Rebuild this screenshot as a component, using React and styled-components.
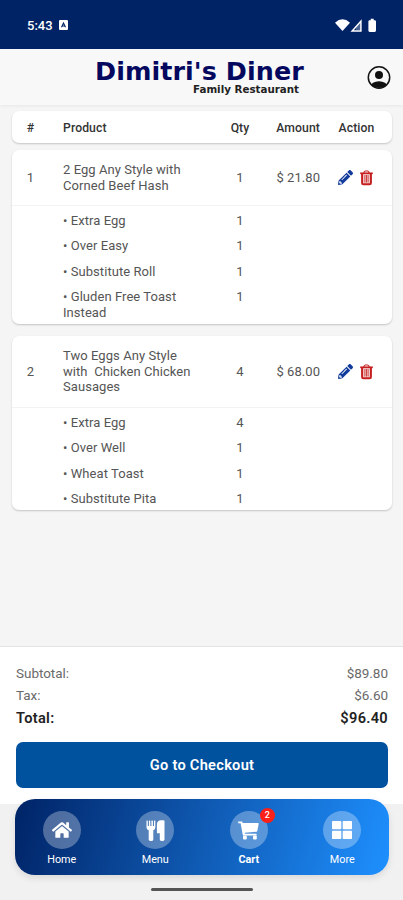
import React from "react";
import styled, { createGlobalStyle } from "styled-components";
import { FaPencilAlt, FaHome } from "react-icons/fa";

const GlobalStyle = createGlobalStyle`
  * { box-sizing: border-box; }
  body { margin: 0; background: #f5f5f5; font-family: Roboto, "Liberation Sans", sans-serif; }
`;

const Screen = styled.div`
  width: 403px;
  height: 900px;
  display: flex;
  flex-direction: column;
  background: #f5f5f5;
  overflow: hidden;
`;

const StatusBar = styled.div`
  height: 49px;
  flex: none;
  display: flex;
  align-items: center;
  justify-content: space-between;
  padding: 1px 26px 0 27px;
  background: #002366;
  color: #fff;
`;

const StatusGroup = styled.div`
  display: flex;
  align-items: center;
  gap: ${(p) => p.$gap}px;
`;

const Clock = styled.span`
  font-size: 13px;
  font-weight: 500;
`;

const Header = styled.header`
  height: 56px;
  flex: none;
  display: grid;
  grid-template-columns: 1fr 24px;
  align-items: center;
  padding: 0 12px 0 95px;
  background: #f8f8f8;
  box-shadow: 0 1px 3px rgba(0, 0, 0, 0.06);
`;

const Logo = styled.div`
  width: 212px;
  font-family: "DejaVu Sans", sans-serif;
  font-weight: 700;
  white-space: nowrap;
`;

const LogoName = styled.div`
  font-size: 25.4px;
  letter-spacing: 0.08px;
  line-height: 26px;
  color: #05085f;
`;

const LogoTag = styled.div`
  height: 12px;
  font-size: 10.3px;
  line-height: 11px;
  color: #222;
  padding-left: 98px;
`;

const Main = styled.main`
  flex: 1;
  min-height: 0;
  padding: 6px 11px 0 12px;
`;

const Card = styled.section`
  height: ${(p) => p.$height}px;
  margin-bottom: ${(p) => p.$gap}px;
  background: #fff;
  border-radius: 7px;
  box-shadow: 0 1px 2px rgba(0, 0, 0, 0.2);
`;

const Row = styled.div`
  display: grid;
  grid-template-columns: 37px 158px 66px 1fr 71px;
  align-items: ${(p) => (p.$top ? "start" : "center")};
  height: ${(p) => (p.$height ? `${p.$height}px` : "auto")};
  font-size: 13px;
  line-height: 15.5px;
  letter-spacing: 0.06px;
  color: #555;
`;

const HeadRow = styled(Row)`
  height: 35px;
  font-size: 12.2px;
  font-weight: 500;
  letter-spacing: 0.1px;
  color: #333;
`;

const ItemRow = styled(Row)`
  border-bottom: 1px solid #f3f3f3;
`;

const Options = styled.div`
  display: grid;
  row-gap: 10px;
  padding-top: 6.5px;
`;

const Center = styled.span`
  text-align: center;
`;

const Product = styled.span`
  padding-left: 14px;
  white-space: pre;
`;

const Qty = styled.span`
  text-align: center;
`;

const Amount = styled.span`
  text-align: right;
  white-space: nowrap;
  padding-right: 1px;
`;

const Actions = styled.span`
  display: flex;
  align-items: center;
  gap: 7px;
  padding-left: 17px;
`;

const Summary = styled.section`
  height: 158px;
  flex: none;
  padding: 16px 15px 0 16px;
  background: #fff;
  border-top: 1px solid #e3e3e3;
`;

const SumLine = styled.div`
  display: flex;
  justify-content: space-between;
  font-size: 13.5px;
  line-height: 21.5px;
  letter-spacing: -0.03px;
  color: #6a6a6a;
`;

const TotalLine = styled(SumLine)`
  font-size: 14.6px;
  line-height: 25px;
  font-weight: 600;
  letter-spacing: 0.3px;
  color: #222;
`;

const Checkout = styled.button`
  display: block;
  width: 372px;
  height: 46px;
  margin-top: 11px;
  padding: 0;
  border: 0;
  border-radius: 7px;
  background: #00529f;
  color: #fff;
  font: 600 14.6px Roboto, sans-serif;
  letter-spacing: 0.28px;
`;

const Bottom = styled.div`
  height: 96px;
  flex: none;
  padding: 0 14px 0 15px;
  background: #f1f1f1;
`;

const NavBar = styled.nav`
  height: 76px;
  margin-top: -5px;
  display: grid;
  grid-template-columns: repeat(4, 1fr);
  border-radius: 20px;
  background: linear-gradient(105deg, #002366 0%, #1e90ff 100%);
  box-shadow: 0 3px 7px rgba(0, 0, 0, 0.1);
  position: relative;
`;

const NavItem = styled.div`
  display: flex;
  flex-direction: column;
  align-items: center;
  padding-top: 12px;
  color: #fff;
`;

const Disc = styled.div`
  position: relative;
  display: grid;
  place-items: center;
  width: 38px;
  height: 38px;
  border-radius: 50%;
  background: rgba(255, 255, 255, 0.3);
`;

const NavLabel = styled.span`
  margin-top: 4px;
  font-size: 10.8px;
  line-height: 13px;
  font-weight: ${(p) => (p.$active ? 700 : 400)};
`;

const Badge = styled.span`
  position: absolute;
  top: -3px;
  right: -7px;
  width: 15px;
  height: 15px;
  border-radius: 50%;
  background: #fb2018;
  font-size: 9px;
  font-weight: 500;
  line-height: 15px;
  text-align: center;
`;

const HomeBar = styled.div`
  width: 102px;
  height: 3px;
  margin: 13px auto 0;
  border-radius: 2px;
  background: #555;
`;

const AppBadgeIcon = () => (
  <svg width="9" height="10" viewBox="0 0 9 10">
    <rect width="9" height="10" rx="1" fill="#fff" />
    <path d="M2.5 7.300 4.500 3l2 4.300M3.300 6h2.400" fill="none" stroke="#002366" strokeWidth="1.1" />
  </svg>
);

const SignalIcons = () => (
  <svg width="42" height="15" viewBox="0 0 42 15">
    <path d="M0 4.700Q7.500-2.200 15 4.700L7.500 13Z" fill="#fff" />
    <path d="M17.200 12.900h8.700V3.300Z" fill="none" stroke="#fff" strokeWidth="1.5" />
    <path d="M21 12V9.500l4-4V12Z" fill="#fff" opacity=".3" />
    <path d="M35.700.8h3v1.500h1q1.300 0 1.300 1.300v9q0 1.400-1.300 1.400h-5q-1.300 0-1.300-1.400v-9q0-1.300 1.300-1.300h1Z" fill="#fff" />
  </svg>
);

const UserIcon = () => (
  <svg width="24" height="24" viewBox="0 0 24 24">
    <clipPath id="user-ring"><circle cx="12" cy="12.5" r="10.5" /></clipPath>
    <circle cx="12" cy="12.5" r="10.7" fill="none" stroke="#111" strokeWidth="1.5" />
    <circle cx="12" cy="10" r="4" fill="#111" />
    <ellipse cx="12" cy="21.5" rx="8.5" ry="5.2" fill="#111" clipPath="url(#user-ring)" />
  </svg>
);

const TrashIcon = () => (
  <svg width="13" height="16" viewBox="0 0 13 16" fill="none" stroke="#c51f20">
    <path d="M2 3.5h9v9.600q0 1.400-1.400 1.400H3.400Q2 14.500 2 13.100Z" fill="#f6d5d5" stroke="none" />
    <path d="M.2 3.300h12.600" strokeWidth="1.7" />
    <path d="M3.800 3Q4.100 1 5.300 1h2.400Q8.900 1 9.200 3" strokeWidth="1.2" />
    <path d="M2.100 3.500v9.500q0 1.300 1.300 1.300h6.200q1.300 0 1.300-1.300V3.500" strokeWidth="2" />
    <path d="M4.900 5v7.500M6.500 5v7.500M8.100 5v7.500" strokeWidth=".8" />
  </svg>
);

const CutleryIcon = () => (
  <svg width="19" height="21" viewBox="0 0 19 21" fill="#fff">
    <path d="M.5.8Q1 0 1.800.8V6h1.100V.8q.7-.8 1.400 0V6h1.100V.8q.8-.8 1.500 0V6H8V.8q.7-.8 1.300 0v6.700q0 2-2 2.800v9.100q0 1.500-2.300 1.500t-2.300-1.500v-9.100Q.5 9.500.5 7.500Z" />
    <path d="M18.500 1v18.400q0 1.500-2.400 1.500-2.300 0-2.300-1.500v-6.100h-2.900V4.700Q10.900.2 15.200.2h2.200q1.100 0 1.100.8Z" />
  </svg>
);

const CartIcon = () => (
  <svg width="21" height="19" viewBox="0 0 21 19" fill="#fff">
    <path d="M.2.5h3.500q.8 0 1 .8L4.300 2H20q.8 0 .7.800l-1.400 7.100q-.1.700-.8.800L6.700 11.800l.3 1h11q.7 0 .7.900t-.7.900H5.600q-.7 0-.8-.7L2.600 2.300H.2Z" />
    <rect x="5" y="14.500" width="3.800" height="4" rx="1" />
    <rect x="15" y="14.500" width="3.800" height="4" rx="1" />
  </svg>
);

const GridIcon = () => (
  <svg width="20" height="18" viewBox="0 0 20 18" fill="#fff">
    <rect width="9.300" height="8.300" rx=".8" />
    <rect x="10.700" width="9.300" height="8.300" rx=".8" />
    <rect y="9.700" width="9.300" height="8.300" rx=".8" />
    <rect x="10.700" y="9.700" width="9.300" height="8.300" rx=".8" />
  </svg>
);

const orders = [
  {
    name: "2 Egg Any Style with\nCorned Beef Hash",
    qty: 1,
    amount: "$ 21.80",
    rowHeight: 56,
    options: [["Extra Egg", 1], ["Over Easy", 1], ["Substitute Roll", 1], ["Gluden Free Toast\nInstead", 1]],
  },
  {
    name: "Two Eggs Any Style\nwith  Chicken Chicken\nSausages",
    qty: 4,
    amount: "$ 68.00",
    rowHeight: 72,
    options: [["Extra Egg", 4], ["Over Well", 1], ["Wheat Toast", 1], ["Substitute Pita", 1]],
  },
];

const OrderCard = ({ order, index }) => (
  <Card $height={174} $gap={12}>
    <ItemRow $height={order.rowHeight}>
      <Center>{index}</Center>
      <Product>{order.name}</Product>
      <Qty>{order.qty}</Qty>
      <Amount>{order.amount}</Amount>
      <Actions>
        <FaPencilAlt size={15} color="#123b9b" />
        <TrashIcon />
      </Actions>
    </ItemRow>
    <Options>
      {order.options.map(([name, qty]) => (
        <Row key={name} $top>
          <span />
          <Product>{`• ${name}`}</Product>
          <Qty>{qty}</Qty>
        </Row>
      ))}
    </Options>
  </Card>
);

export default function App() {
  return (
    <Screen>
      <GlobalStyle />
      <StatusBar>
        <StatusGroup $gap={6}>
          <Clock>5:43</Clock>
          <AppBadgeIcon />
        </StatusGroup>
        <SignalIcons />
      </StatusBar>
      <Header>
        <Logo>
          <LogoName>Dimitri's Diner</LogoName>
          <LogoTag>Family Restaurant</LogoTag>
        </Logo>
        <UserIcon />
      </Header>
      <Main>
        <Card $height={32} $gap={7}>
          <HeadRow>
            <Center>#</Center>
            <Product>Product</Product>
            <Qty>Qty</Qty>
            <Amount>Amount</Amount>
            <Center>Action</Center>
          </HeadRow>
        </Card>
        {orders.map((order, i) => (
          <OrderCard key={order.name} order={order} index={i + 1} />
        ))}
      </Main>
      <Summary>
        <SumLine><span>Subtotal:</span><span>$89.80</span></SumLine>
        <SumLine><span>Tax:</span><span>$6.60</span></SumLine>
        <TotalLine><span>Total:</span><span>$96.40</span></TotalLine>
        <Checkout>Go to Checkout</Checkout>
      </Summary>
      <Bottom>
        <NavBar>
          <NavItem>
            <Disc><FaHome size={20} /></Disc>
            <NavLabel>Home</NavLabel>
          </NavItem>
          <NavItem>
            <Disc><CutleryIcon /></Disc>
            <NavLabel>Menu</NavLabel>
          </NavItem>
          <NavItem>
            <Disc><CartIcon /><Badge>2</Badge></Disc>
            <NavLabel $active>Cart</NavLabel>
          </NavItem>
          <NavItem>
            <Disc><GridIcon /></Disc>
            <NavLabel>More</NavLabel>
          </NavItem>
        </NavBar>
        <HomeBar />
      </Bottom>
    </Screen>
  );
}
